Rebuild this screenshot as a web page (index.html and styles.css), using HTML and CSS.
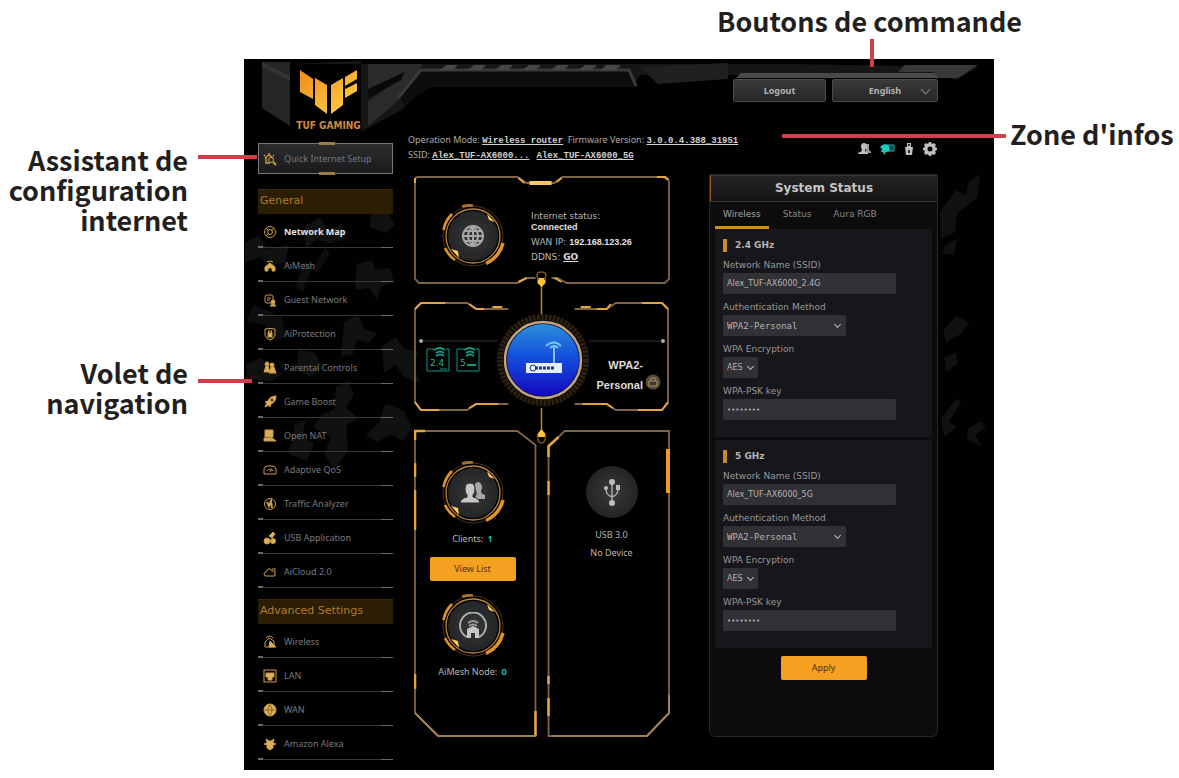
FILE: index.html
```html
<!DOCTYPE html>
<html lang="fr">
<head>
<meta charset="utf-8">
<title>TUF Gaming – Interface du routeur</title>
<link rel="stylesheet" href="styles.css">
</head>
<body>
<svg class="defs" aria-hidden="true">
  <defs>
    <linearGradient id="gold" x1="0" y1="0" x2="1" y2="1"><stop offset="0" stop-color="#f08a1c"/><stop offset="1" stop-color="#ffd54a"/></linearGradient>
    <radialGradient id="disc"><stop offset="0" stop-color="#383838"/><stop offset="1" stop-color="#232526"/></radialGradient>
    <linearGradient id="blue" x1="0" y1="0" x2="0" y2="1"><stop offset="0" stop-color="#2b8fd8"/><stop offset=".45" stop-color="#1450dc"/><stop offset="1" stop-color="#1408c0"/></linearGradient>
    <symbol id="ring" viewBox="0 0 64 64">
      <circle cx="32" cy="32" r="25" fill="url(#disc)"/>
      <circle cx="32" cy="32" r="27" fill="none" stroke="#b98238" stroke-width="1.3"/>
      <circle cx="32" cy="32" r="30" fill="none" stroke="#4a3316" stroke-width="1"/>
      <g fill="none" stroke="#e0932a" stroke-width="2.6">
        <path d="M2.500 26A30 30 0 0 1 11 10"/><path d="M21 2.500A31 31 0 0 1 32 1.500" stroke="#a8712e"/>
        <path d="M62 39A31 31 0 0 1 45 59.500" stroke-width="3.500"/><path d="M4 44A30 30 0 0 0 14 56"/>
      </g>
      <path d="M46 10l8 8-6-2zM10 45l8 9-1-7z" fill="#ffc65e"/>
    </symbol>
    <symbol id="i-wizard" viewBox="0 0 14 14"><path d="M2 6l4-3 4 3M3 6v5h4M6 1v2M1 3l1 1M11 3l-1 1" stroke-width="1.500"/><circle cx="8" cy="8" r="2.500"/><path d="M10 10l3 3" stroke-width="2"/></symbol>
    <symbol id="i-map" viewBox="0 0 14 14"><circle cx="7" cy="7" r="5.500"/><circle cx="7" cy="7" r="2.500"/><path d="M3 3l3 3M11 3L8 6M3 11l3-3"/></symbol>
    <symbol id="i-mesh" viewBox="0 0 14 14"><path class="f" d="M7 4l5 4v4H9V9H5v3H2V8z"/><path d="M4 3q3-2 6 0"/></symbol>
    <symbol id="i-guest" viewBox="0 0 14 14"><rect x="2" y="2" width="8" height="8" rx="2"/><path d="M4 5h4M4 7h3"/><circle class="f" cx="10" cy="9" r="2"/><path class="f" d="M7 13q3-4 6 0z"/></symbol>
    <symbol id="i-shield" viewBox="0 0 14 14"><path d="M2 2q5-1 10 0v6q-1 4-5 5-4-1-5-5z"/><rect class="f" x="5" y="6" width="4" height="4"/><path d="M5.500 6V4h3v2"/></symbol>
    <symbol id="i-family" viewBox="0 0 14 14"><circle class="f" cx="4" cy="3" r="2"/><circle class="f" cx="9" cy="4" r="2"/><path class="f" d="M1 11l2-6h2l2 6zM6 12l2-6h3l2 6z"/></symbol>
    <symbol id="i-rocket" viewBox="0 0 14 14"><path class="f" d="M13 1q-6 0-8 5L2 7l2 1-2 4 4-2 1 2 1-3q5-2 5-8z"/><circle cx="9" cy="5" r="1" stroke="#221705"/></symbol>
    <symbol id="i-nat" viewBox="0 0 14 14"><path class="f" d="M2 1h8v7H2zM1 9h7v3H1zM8 8l5 4H8z"/></symbol>
    <symbol id="i-gauge" viewBox="0 0 14 14"><path d="M1 11V6q0-3 4-3h4q4 0 4 3v5zM4 8q3-4 6 0M7 9l2-3"/></symbol>
    <symbol id="i-traffic" viewBox="0 0 14 14"><circle cx="7" cy="7" r="5.500"/><path d="M4 5l2 4 2-5 1 7" stroke-width="2"/></symbol>
    <symbol id="i-usbapp" viewBox="0 0 14 14"><path class="f" d="M6 5l4-4 2 2-3 4z"/><circle class="f" cx="4" cy="10" r="3"/><circle class="f" cx="10" cy="10" r="2.500"/></symbol>
    <symbol id="i-cloud" viewBox="0 0 14 14"><path d="M3 11h9V6H9Q8 3 5 4 4 5 4 6 1 7 1 9q0 2 2 2zM9 4h4"/></symbol>
    <symbol id="i-wifi" viewBox="0 0 14 14"><path d="M2 12V7l4-4 5 3v6zM3 3q4-4 7 0"/><path class="f" d="M7 6l6 6H6z"/></symbol>
    <symbol id="i-lan" viewBox="0 0 14 14"><rect x="1" y="1" width="12" height="12"/><path class="f" d="M3 4h8v4H9v3H5V8H3z"/></symbol>
    <symbol id="i-wan" viewBox="0 0 14 14"><circle class="f" cx="7" cy="7" r="6"/><path stroke="#8a6424" d="M2 7h10M7 2q-4 5 0 10M7 2q4 5 0 10"/></symbol>
    <symbol id="i-alexa" viewBox="0 0 14 14"><path class="f" d="M3 2l3 2h2l3-2-1 4 3 1-3 1v3l-3 2-3-2V8L1 7l3-1z"/></symbol>
    <symbol id="i-users" viewBox="0 0 28 24"><path d="M16 3q3-4 6 0 2 3 0 7 0 3 4 4v4h-9q-1-3 1-5-2-5-2-10z" opacity=".8"/><path d="M6 8q0-6 5-6t5 6q0 4-2 6v2q6 1 7 6H1q1-5 7-6v-2Q6 12 6 8z" stroke="#292a2b"/></symbol>
  </defs>
</svg>

<main class="figure">
  <h2 class="callout callout-top">Boutons de commande</h2>

  <div class="callouts-left">
    <h2 class="callout callout-side">Assistant de<br>configuration<br>internet</h2>
    <h2 class="callout callout-side callout-nav">Volet de<br>navigation</h2>
  </div>

  <section class="router" lang="en">
    <svg class="backdrop" viewBox="244 59 750 711" preserveAspectRatio="none" aria-hidden="true">
      <rect x="244" y="59" width="750" height="711" fill="#020102"/>
      <path d="M288 64h500l190 3-22 13-15-5H640l-5 9H425l-22 25-42 23V61z" fill="#161616"/>
      <path d="M262 62h28v64l-28-18z" fill="#242526"/><path d="M262 62l28 14v5l-28-15z" fill="#333"/>
      <path d="M368 64h55l-28 40-27 22V101l28-19-28 11z" fill="#2a2b2c"/><path d="M368 98l33-18 4-8-37 17z" fill="#0a0a0a"/>
      <path d="M400 96l22-25h207l8 16H430l-26 18z" fill="#0d0d0e"/>
      <path d="M398 98l23-28h208l7 16" fill="none" stroke="#3a3a3a" stroke-width="3"/>
      <path d="M446 65h12l-5 5h-13zM474 65h12l-5 5h-13zM501 65h12l-5 5h-13zM529 65h12l-5 5h-13zM557 65h12l-5 5h-13zM585 65h12l-5 5h-13zM606 65h15l-5 5h-15z" fill="#464646"/>
      <path d="M640 67l88-4v16l-70 5z" fill="#202021"/>
      <path d="M741 73h194l4 5H736z" fill="#4a4a4a"/><path d="M905 65h73l-20 13h-19l-5-6h-36z" fill="#383838"/>
      <g fill="#101111">
        <path d="M245 243l14-8 8 14 22-4-4 18-17 3-8-9-15 6zM305 226l15-8 8 12 14-6 4 14-18 6-10-5-12 9zM357 264l15-4 3 10 15-2 4 14-13 4-4 14-8-12-14 2zM344 322l14-7 6 14 13 4-8 10-12-3-4 14-12 2z"/>
        <path d="M299 350l16 3 7 15-12 9-14-8zM336 387l12-6 6 14-8 13 12 10-12 8 2 24-14 20-10-16 7-17-18-10 10-13 11-4zM386 403l18 8 8 17-9 13-12-7-14 8-11-7 12-11zM294 424l12-4-4 16 12 8-7 17-20-8 7-14z"/>
        <path d="M382 346l14-9 8 12 14 2-5 16 8 16-17-6-8-12-12 8zM372 210l12-5 11 20-9 8-17-6zM246 364l16-6 5 12 17 3-13 8-24-2z"/>
        <path d="M940 212l16-22 10 5 2-12 12-9-3 24-20 16-2 18-14 7zM945 245l12-6-3 16-12-2zM943 330l14-14 12 7-8 11-15 8zM944 358l12-6 2 11-12 9zM941 419l15-20 5 3-12 20 8 5-13 9zM968 429l12-8 6 6-11 8 6 11-14-7z"/>
      </g>
      <path d="M295 287l10-25 9 4 11-18 5 5-11 18-8-1-8 22zM254 305l28 12 4 20-16 4-5-16-19-4z" fill="#0d0e0f"/>
    </svg>

    <aside class="sidebar">
      <a class="brand" href="#">
        <svg class="brand-mark" viewBox="300 70 58 44" aria-hidden="true"><g fill="url(#gold)"><path d="M300 70l13 9v20l-13-7zM315 78l12 7v29l-12-9zM331 85l12-7v27l-12 9zM345 77l12-7v9l-12 7zM345 89l12-6v8l-12 7z"/></g></svg>
        <span class="brand-name">TUF GAMING</span>
      </a>
      <button class="wizard" type="button"><svg class="ico"><use href="#i-wizard"/></svg>Quick Internet Setup</button>
      <nav class="nav">
        <h3 class="nav-title">General</h3>
        <ul>
          <li><a class="active" href="#"><svg class="ico"><use href="#i-map"/></svg>Network Map</a></li>
          <li><a href="#"><svg class="ico"><use href="#i-mesh"/></svg>AiMesh</a></li>
          <li><a href="#"><svg class="ico"><use href="#i-guest"/></svg>Guest Network</a></li>
          <li><a href="#"><svg class="ico"><use href="#i-shield"/></svg>AiProtection</a></li>
          <li><a href="#"><svg class="ico"><use href="#i-family"/></svg>Parental Controls</a></li>
          <li><a href="#"><svg class="ico"><use href="#i-rocket"/></svg>Game Boost</a></li>
          <li><a href="#"><svg class="ico"><use href="#i-nat"/></svg>Open NAT</a></li>
          <li><a href="#"><svg class="ico"><use href="#i-gauge"/></svg>Adaptive QoS</a></li>
          <li><a href="#"><svg class="ico"><use href="#i-traffic"/></svg>Traffic Analyzer</a></li>
          <li><a href="#"><svg class="ico"><use href="#i-usbapp"/></svg>USB Application</a></li>
          <li><a href="#"><svg class="ico"><use href="#i-cloud"/></svg>AiCloud 2.0</a></li>
        </ul>
        <h3 class="nav-title">Advanced Settings</h3>
        <ul>
          <li><a href="#"><svg class="ico"><use href="#i-wifi"/></svg>Wireless</a></li>
          <li><a href="#"><svg class="ico"><use href="#i-lan"/></svg>LAN</a></li>
          <li><a href="#"><svg class="ico"><use href="#i-wan"/></svg>WAN</a></li>
          <li><a href="#"><svg class="ico"><use href="#i-alexa"/></svg>Amazon Alexa</a></li>
        </ul>
      </nav>
    </aside>

    <div class="content">
      <header class="commands">
        <button class="command" type="button">Logout</button>
        <span class="select language"><select aria-label="Language"><option>English</option></select></span>
      </header>

      <div class="info">
        <p class="info-text">Operation Mode: <a href="#">Wireless router</a>&nbsp; Firmware Version: <a href="#">3.0.0.4.388_31951</a><br>SSID: <a href="#">Alex_TUF-AX6000...</a>&nbsp;&nbsp; <a href="#">Alex_TUF-AX6000_5G</a></p>
        <div class="info-icons">
          <svg viewBox="0 0 14 14"><path d="M8 2h3v6l2 2v1H8z" fill="#999"/><path d="M3 5q0-4 3-4t3 4L7 8v1l3 2v1H0v-1l4-2z"/></svg>
          <svg class="teal" viewBox="0 0 16 14"><path d="M6 3h9v6H6z" fill="#04453f" stroke="#19b8ac"/><path d="M1 5q4-5 9-1l1 5-4 1-2 3-1-3H2l1-3z"/></svg>
          <svg viewBox="0 0 14 14"><path d="M5 1h4v4h2l-1 8H4L3 5h2z"/><path d="M6 2v2h2V2zM6 8h2v3H6z" fill="#333"/></svg>
          <svg viewBox="0 0 14 14"><path fill-rule="evenodd" d="M6 0h2l1 2 2-1 2 2-1 2 2 1v2l-2 1 1 2-2 2-2-1-1 2H6l-1-2-2 1-2-2 1-2-2-1V6l2-1-1-2 2-2 2 1zM7 4.500A2.500 2.500 0 1 0 7 9.500 2.500 2.500 0 1 0 7 4.500z"/></svg>
        </div>
      </div>

      <div class="dashboard">
        <section class="map" aria-label="Network Map">
          <svg class="frames" viewBox="414 176 256 561" preserveAspectRatio="none" aria-hidden="true">
            <g fill="none" stroke="#7d6648" stroke-width="1.800">
              <path d="M418 177h99l9 6h28l8-6h99q7 0 7 5v97l-4 4h-98l-9-5h-6M535 278h-9l-9 5h-98l-4-4v-98q0-4 3-4" />
              <path d="M508 309h-32l-9-6h-46l-6 6v94l6 7h46l9-6h32M574 309h32l9-6h46l6 6v94l-6 7h-46l-9-6h-32"/>
              <path d="M415 431h102l18 14v291h-97l-23-23zM564 431h104v282l-22 23h-98v-289z"/>
            </g>
            <g fill="none" stroke="#3c3328"><path d="M421 341h76M588 341h74"/></g>
            <g fill="#aaa"><circle cx="421" cy="341" r="2"/><circle cx="662" cy="341" r="2"/></g>
            <g fill="none" stroke="#e3a542" stroke-width="2.500">
              <path d="M529 183h22" stroke="#ffc65c" stroke-width="4"/>
              <path d="M518 178l6 5M561 178l-5 4M518 282l8-4M561 282l-7-4M415 178v5M656 177h8l3 3" stroke-width="2"/>
              <path d="M415 309l6-6h24M469 304l7 5h8M492 307h10M667 309l-6-6h-20M610 304l-4 5h-10M590 307h-10M415 402l6 8h18M469 408l7-4h22M667 402l-6 8h-24M612 408l-6-4h-24" stroke-width="2"/>
              <path d="M415 463v14M415 490v40M415 674v15M415 440v-9h10"/>
              <path d="M548 457v-11l10-9M548 481v14M548 676v8M548 698v18M535 711v25"/>
              <path d="M668 695v18l-22 23h-94M535 736h-97l-23-23" stroke="#a3834f" stroke-width="2"/>
              <path d="M667 449v44" stroke="#ef9b24" stroke-width="4"/>
            </g>
            <g fill="#ffc832"><path d="M541 285v31M541 408v22" stroke="#b18548" stroke-width="1.500"/><path d="M537 278h8v5l-4 4-4-4zM537 437v-3l4-5 4 5v3z"/><path d="M538 280q-4-8 3-8t3 8M537 435q0 8 4 8t4-8" fill="none" stroke="#765018" stroke-width="1.500"/></g>
          </svg>

          <div class="box internet">
            <span class="badge"><svg class="ring"><use href="#ring"/></svg><svg class="glyph globe" viewBox="0 0 24 24"><circle cx="12" cy="12" r="10"/><path d="M2 12h20M4 7h16M4 17h16M12 2v20M12 2q-10 10 0 20M12 2q10 10 0 20"/></svg></span>
            <div class="internet-text">
              <p>Internet status:<br><strong>Connected</strong></p>
              <p>WAN IP: <strong>192.168.123.26</strong></p>
              <p>DDNS: <a href="#">GO</a></p>
            </div>
          </div>

          <div class="box wireless">
            <div class="bands">
              <svg viewBox="0 0 24 26" aria-hidden="true"><path d="M8 2H1v22h22V2h-3" class="band-line"/><path d="M8 3q6-4 11 0M10 6q4-3 8 0M10 9q4-3 8 0" class="band-line strong"/><text x="4" y="19">2.4</text><path d="M14 22h7" class="band-line"/></svg>
              <svg viewBox="0 0 24 26" aria-hidden="true"><path d="M8 2H1v22h22V2h-3" class="band-line"/><path d="M8 3q6-4 11 0M10 6q4-3 8 0M10 9q4-3 8 0" class="band-line strong"/><text x="4" y="19">5</text><path d="M11 18h9" class="band-line strong"/></svg>
            </div>
            <svg class="core" viewBox="0 0 96 96" aria-hidden="true">
              <circle cx="48" cy="48" r="43" fill="#070707" stroke="#2c2010" stroke-width="6" stroke-dasharray="3 1"/>
              <circle cx="48" cy="48" r="38" fill="#05113c" stroke="#c5a37c" stroke-width="2.500"/>
              <circle cx="48" cy="48" r="36" fill="url(#blue)"/>
              <path d="M31 51h36v10H31z" fill="#e6efff"/><path d="M59 34v17" stroke="#8db9ef" stroke-width="2"/>
              <path d="M51 34q8-7 15 0M55 36q4-4 8 0" fill="none" stroke="#77c5f3" stroke-width="2"/>
              <circle cx="38" cy="56" r="3" fill="none" stroke="#1d328e"/><path d="M40 56h20" stroke="#1d328e" stroke-width="3" stroke-dasharray="3 1"/>
            </svg>
            <div class="security">
              <p><strong>WPA2-<br>Personal</strong></p>
              <svg viewBox="0 0 16 16" aria-hidden="true"><circle cx="8" cy="8" r="7.500" fill="#584b35"/><path d="M4 7h8v5H4zM6 7V4h4v3" fill="#40372a" stroke="#aa9876"/></svg>
            </div>
          </div>

          <div class="devices">
            <div class="box clients">
              <span class="badge"><svg class="ring"><use href="#ring"/></svg><svg class="glyph people"><use href="#i-users"/></svg></span>
              <p class="count">Clients: <b>1</b></p>
              <button class="primary" type="button">View List</button>
              <span class="badge mesh"><svg class="ring"><use href="#ring"/></svg><svg class="glyph node" viewBox="0 0 28 28"><path d="M8 25a13 13 0 1 1 12 0" fill="none" stroke="#a9afb3" stroke-width="2"/><path d="M9 11q5-4 10 0M10 14q4-3 8 0" fill="none" stroke="#999" stroke-width="2"/><path d="M8 17l6-3 6 3v9h-4v-5h-4v5H8z"/></svg></span>
              <p class="count">AiMesh Node: <b>0</b></p>
            </div>
            <div class="box usb">
              <svg class="usb-disc" viewBox="0 0 54 54" aria-hidden="true"><circle cx="27" cy="27" r="26" fill="url(#disc)"/><g fill="none" stroke="#aaa" stroke-width="1.500"><path d="M27 17v20M21 24q0 6 6 8M33 24q0 6-6 8"/></g><circle cx="27" cy="17" r="3" fill="#bbb"/><circle cx="21" cy="23" r="2" fill="#bbb"/><path d="M31 20h4v5h-4z" fill="#bbb"/><circle cx="27" cy="38" r="3" fill="#bbb"/></svg>
              <p>USB 3.0</p><p>No Device</p>
            </div>
          </div>
        </section>

        <section class="status">
          <h2 class="status-title">System Status</h2>
          <div class="tabs" role="tablist">
            <button role="tab" aria-selected="true" type="button">Wireless</button>
            <button role="tab" aria-selected="false" type="button">Status</button>
            <button role="tab" aria-selected="false" type="button">Aura RGB</button>
          </div>
          <form class="bands-form">
            <fieldset>
              <legend>2.4 GHz</legend>
              <label for="ssid24">Network Name (SSID)</label>
              <input id="ssid24" type="text" value="Alex_TUF-AX6000_2.4G">
              <label for="auth24">Authentication Method</label>
              <span class="select auth"><select id="auth24"><option>WPA2-Personal</option></select></span>
              <label for="enc24">WPA Encryption</label>
              <span class="select enc"><select id="enc24"><option>AES</option></select></span>
              <label for="key24">WPA-PSK key</label>
              <input id="key24" type="password" value="12345678">
            </fieldset>
            <fieldset>
              <legend>5 GHz</legend>
              <label for="ssid5">Network Name (SSID)</label>
              <input id="ssid5" type="text" value="Alex_TUF-AX6000_5G">
              <label for="auth5">Authentication Method</label>
              <span class="select auth"><select id="auth5"><option>WPA2-Personal</option></select></span>
              <label for="enc5">WPA Encryption</label>
              <span class="select enc"><select id="enc5"><option>AES</option></select></span>
              <label for="key5">WPA-PSK key</label>
              <input id="key5" type="password" value="12345678">
            </fieldset>
            <button class="primary" type="button">Apply</button>
          </form>
        </section>
      </div>
    </div>
  </section>

  <div class="callouts-right">
    <h2 class="callout callout-info">Zone d'infos</h2>
  </div>
</main>
</body>
</html>
```
FILE: styles.css
```css
* { box-sizing: border-box; }

body {
  margin: 0;
  background: #fff;
  font-family: "DejaVu Sans", sans-serif;
  font-size: 9px;
  color: #bbb;
}

h2, h3, p, ul { margin: 0; padding: 0; font-weight: normal; }
ul { list-style: none; }
a { color: inherit; }
button, input, select { font: inherit; color: inherit; border: 0; margin: 0; border-radius: 0; }
svg { display: block; flex: none; }
.defs { position: absolute; width: 0; height: 0; }

/* Annotated figure */
.figure {
  display: grid;
  grid-template-columns: 244px minmax(0, 1fr) 185px;
  grid-template-rows: 59px auto;
  padding-bottom: 8px;
}

.callout {
  position: relative;
  font: 700 27px/30px "Noto Sans CJK SC", "Open Sans", sans-serif;
  color: #231f20;
  white-space: nowrap;
}
.callout::after { content: ""; position: absolute; background: #cf3f4b; z-index: 2; }

.callout-top {
  grid-column: 2 / 4;
  justify-self: end;
  margin: 6px 157px 0 0;
}
.callout-top::after { left: 50%; top: 33px; width: 4px; height: 28px; }

.callouts-left {
  grid-column: 1;
  grid-row: 2;
  display: flex;
  flex-direction: column;
  gap: 123px;
  padding: 86px 56px 0 0;
  text-align: right;
}
.callout-side::after { left: calc(100% + 10px); top: 10px; width: 59px; height: 4px; }
.callout-nav::after { top: 21px; width: 54px; }

.callouts-right { position: relative; z-index: 1; padding: 60px 0 0 16px; }
.callout-info::after { right: calc(100% + 4px); top: 15px; width: 224px; height: 4px; }

/* Router interface */
.router {
  position: relative;
  z-index: 0;
  display: flex;
  gap: 15px;
  padding: 0 56px 10px 14px;
  background: #020102;
}
.backdrop { position: absolute; inset: 0; width: 100%; height: 100%; z-index: -1; }

.sidebar { flex: none; width: 135px; padding-top: 11px; }
.brand { display: flex; flex-direction: column; align-items: center; text-decoration: none; }
.brand-mark { width: 58px; height: 44px; margin-left: 6px; }
.brand-name {
  margin: 4px 0 9px 6px;
  font: 700 10px/16px "Liberation Sans Narrow", "DejaVu Sans Condensed", sans-serif;
  color: #d08a3c;
}

.ico { width: 14px; height: 14px; fill: none; stroke: #c99b4c; stroke-width: 1px; }
.ico .f, .f { fill: #dcae58; }

.wizard {
  position: relative;
  display: flex;
  align-items: center;
  gap: 7px;
  width: 100%;
  height: 31px;
  padding: 0 4px;
  border: 1px solid #77777a;
  background: linear-gradient(#2b2c2e, #1a1b1d);
  font: 9px/12px "Noto Sans", sans-serif;
  color: #75777c;
}
.wizard::before, .wizard::after {
  content: "";
  position: absolute;
  left: 60px;
  width: 16px;
  height: 3px;
  background: #9b7c47;
}
.wizard::before { top: -2px; }
.wizard::after { bottom: -2px; }

.nav { margin-top: 15px; }
.nav-title {
  height: 25px;
  padding-left: 2px;
  border-top: 1px solid #3d2c0c;
  font: 11px/22px "DejaVu Sans", sans-serif;
  color: #b17b2a;
  background: #2c1e04;
}
.nav ul + .nav-title { margin-top: 11px; }
.nav li { height: 34px; border-bottom: 1px solid #36373a; position: relative; }
.nav li::before, .nav li::after { content: ""; position: absolute; bottom: -1px; height: 2px; background: #68696c; }
.nav li::before { left: 0; width: 5px; }
.nav li::after { right: 0; width: 12px; height: 1px; }
.nav a {
  display: flex;
  align-items: center;
  gap: 7px;
  height: 36px;
  padding-left: 5px;
  font: 9px/12px "Noto Sans", sans-serif;
  color: #77797c;
  text-decoration: none;
}
.nav a.active { font-weight: 700; color: #e4e4e4; }

.content { flex: 1; min-width: 0; display: flex; flex-direction: column; padding-top: 20px; }

.commands { display: flex; justify-content: flex-end; gap: 6px; }
.command, .language select {
  height: 23px;
  border: 1px solid #4c4c4c;
  border-radius: 2px;
  background: linear-gradient(#3a3a3a, #262626);
  font: 700 9px/12px "Noto Sans", sans-serif;
  color: #b4b4b4;
}
.command { width: 93px; }
.language { width: 106px; }

.select { position: relative; display: block; }
.select select { appearance: none; width: 100%; }
.select::after {
  content: "";
  position: absolute;
  right: 6px;
  top: 7px;
  width: 4px;
  height: 4px;
  border: solid #bbb;
  border-width: 0 1px 1px 0;
  transform: rotate(45deg);
  pointer-events: none;
}
.language select { text-align-last: center; }
.language::after { width: 6px; height: 6px; right: 9px; border-color: #888; }

.info { display: flex; justify-content: space-between; margin-top: 31px; }
.info-text { font: 9px/14px "Noto Sans", sans-serif; color: #a9a9a9; white-space: nowrap; }
.info-text a { font: 700 9px/14px "Liberation Mono", monospace; color: #d0d0d0; }
.info-icons { display: flex; align-items: flex-end; gap: 7px; margin-right: 1px; padding-bottom: 7px; }
.info-icons svg { width: 14px; height: 14px; fill: #bcbec2; }
.info-icons .teal { width: 16px; fill: #20c8bd; }

.dashboard { display: grid; grid-template-columns: minmax(0, 1fr) 229px; gap: 38px; margin: 11px 0 0 6px; }

/* Network map */
.map { position: relative; display: flex; flex-direction: column; gap: 19px; margin-top: 2px; color: #b5b5b5; }
.frames { position: absolute; inset: 0; width: 100%; height: 100%; }
.box { position: relative; }

.badge { display: grid; place-items: center; width: 64px; height: 64px; flex: none; }
.badge > svg { grid-area: 1 / 1; }
.ring { width: 64px; height: 64px; }
.glyph { fill: #c6c6c6; z-index: 1; }
.globe { width: 24px; height: 24px; fill: none; stroke: #a9a9a9; stroke-width: 2px; }
.people { width: 28px; height: 24px; }
.node { width: 28px; height: 28px; }

.internet { display: flex; align-items: flex-start; gap: 26px; height: 107px; padding: 28px 0 0 27px; }
.internet-text { padding-top: 7px; display: flex; flex-direction: column; gap: 4px; font: 9px/11px "DejaVu Sans", sans-serif; white-space: nowrap; }
.internet-text strong { font: 700 9px/11px "Liberation Sans", sans-serif; color: #e0e0e0; }
.internet-text a { font-weight: 700; color: #ddd; }

.wireless { display: grid; grid-template-columns: 1fr 96px 1fr; height: 108px; align-items: center; }
.bands { display: flex; gap: 6px; padding: 8px 0 0 12px; }
.bands svg { width: 24px; height: 26px; fill: #1fb7a0; }
.bands text { font: 9px "DejaVu Sans", sans-serif; }
.band-line { fill: none; stroke: #149481; }
.strong { stroke-width: 2px; }
.core { width: 96px; height: 96px; margin-top: 8px; }
.security {
  display: flex;
  align-items: flex-end;
  justify-content: flex-end;
  gap: 2px;
  padding: 38px 10px 0 0;
  font: 11px/20px "Liberation Sans", sans-serif;
  color: #ddd;
  text-align: right;
}
.security svg { width: 16px; height: 16px; margin-bottom: 5px; }

.devices { display: grid; grid-template-columns: 1fr 1fr; gap: 11px; height: 308px; }
.clients, .usb { display: flex; flex-direction: column; align-items: center; }
.clients { padding: 32px 6px 0 0; }
.count { margin: 8px 0 12px; font: 9px/12px "Noto Sans", sans-serif; white-space: nowrap; }
.count b { color: #19c3a0; margin-left: 2px; }
.primary {
  width: 86px;
  height: 24px;
  border-radius: 2px;
  background: #f6a021;
  font: 9px/12px "Noto Sans", sans-serif;
  color: #51340a;
}
.mesh { margin-top: 13px; }
.usb { gap: 5px; padding: 36px 0 0 4px; font: 9px/13px "Noto Sans", sans-serif; }
.usb-disc { width: 54px; height: 54px; margin-bottom: 4px; }

/* System status */
.status {
  border: 1px solid #2a2823;
  border-radius: 2px 2px 6px 6px;
  background: #0c0c0c;
  padding-bottom: 56px;
}
.status-title {
  height: 27px;
  border: solid #3a3733;
  border-width: 1px 0;
  border-left: 1px solid #a45c24;
  background: linear-gradient(#252323, #151415);
  font: 700 12px/25px "DejaVu Sans", sans-serif;
  color: #c5c5c5;
  text-align: center;
}
.tabs { display: flex; gap: 6px; padding: 0 5px; }
.tabs button {
  height: 27px;
  padding: 0 8px;
  border-bottom: 3px solid transparent;
  background: none;
  color: #898989;
  white-space: nowrap;
}
.tabs button[aria-selected="true"] { border-color: #d38c22; color: #a5a5a5; }

.bands-form { display: flex; flex-direction: column; align-items: center; gap: 3px; padding: 0 5px; }
.bands-form fieldset {
  display: flex;
  flex-direction: column;
  align-items: flex-start;
  width: 100%;
  min-width: 0;
  min-height: 208px;
  margin: 0;
  padding: 10px 8px 0;
  border: 0;
  background: #17161a;
}
.bands-form legend {
  float: left;
  height: 13px;
  padding: 0 0 0 8px;
  border-left: 4px solid #c98a2b;
  font: 700 9px/13px "DejaVu Sans", sans-serif;
  color: #b5b5b5;
}
.bands-form label { margin: 8px 0 2px; line-height: 11px; color: #989898; }
.bands-form input, .bands-form select { height: 21px; padding: 0 4px; background: #313034; color: #b5b5b5; border-radius: 1px; }
.bands-form input { width: 173px; max-width: 100%; font: 8px/12px "DejaVu Sans", sans-serif; }
.bands-form input[type="password"] { font-size: 7px; }
.auth { width: 123px; }
.auth select { font: 9px/12px "DejaVu Sans Mono", monospace; }
.enc { width: 35px; }
.enc select { font: 8px/12px "DejaVu Sans", sans-serif; }
.enc::after { right: 5px; }
.bands-form .primary { margin-top: 5px; }
```
